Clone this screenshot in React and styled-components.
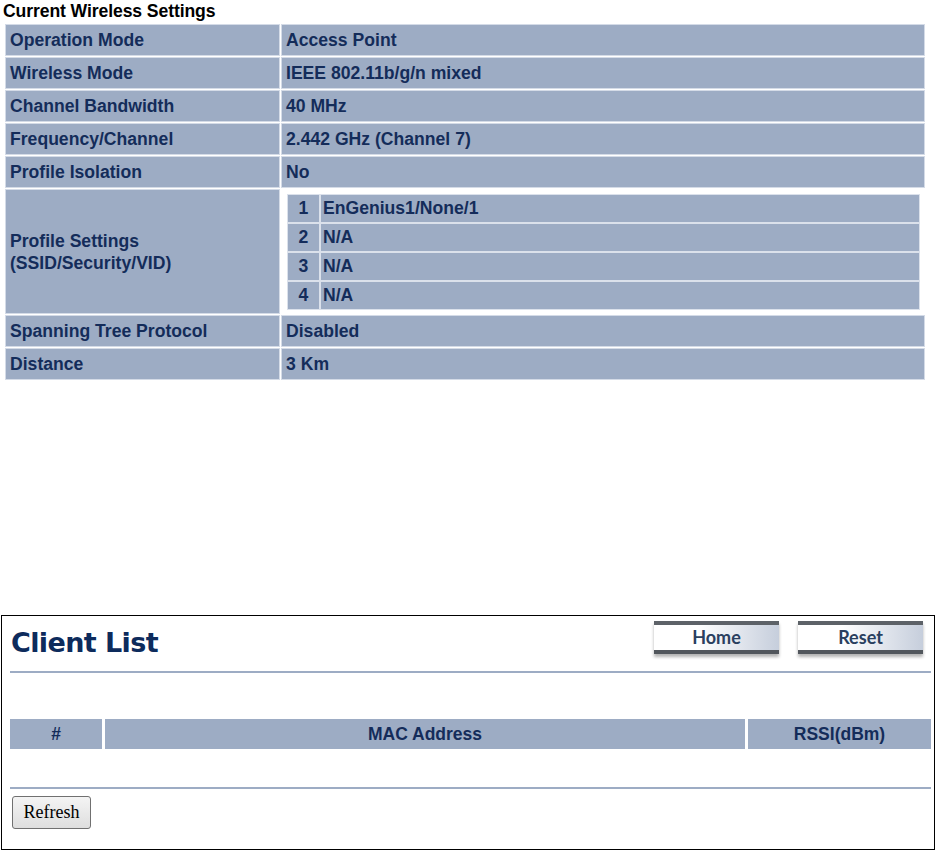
import React from "react";
import styled, { createGlobalStyle } from "styled-components";

const GlobalStyle = createGlobalStyle`
  body {
    margin: 0;
    background: #fff;
    font-family: "Liberation Sans", Arial, sans-serif;
  }
`;

const settings = [
  { label: "Operation Mode", value: "Access Point" },
  { label: "Wireless Mode", value: "IEEE 802.11b/g/n mixed" },
  { label: "Channel Bandwidth", value: "40 MHz" },
  { label: "Frequency/Channel", value: "2.442 GHz (Channel 7)" },
  { label: "Profile Isolation", value: "No" },
  { label: ["Profile Settings", "(SSID/Security/VID)"], profiles: ["EnGenius1/None/1", "N/A", "N/A", "N/A"] },
  { label: "Spanning Tree Protocol", value: "Disabled" },
  { label: "Distance", value: "3 Km" },
];

function App() {
  return (
    <>
      <GlobalStyle />
      <Page>
        <Title>Current Wireless Settings</Title>
        <SettingsTable>
          {settings.map((row) => (
            <React.Fragment key={Array.isArray(row.label) ? row.label[0] : row.label}>
              <Cell $multi={Array.isArray(row.label)}>
                {Array.isArray(row.label)
                  ? row.label.map((l) => <div key={l}>{l}</div>)
                  : row.label}
              </Cell>
              {row.profiles ? (
                <NestedHolder>
                  <ProfileTable>
                    {row.profiles.map((p, i) => (
                      <React.Fragment key={i}>
                        <NumCell>{i + 1}</NumCell>
                        <ProfileCell>{p}</ProfileCell>
                      </React.Fragment>
                    ))}
                  </ProfileTable>
                </NestedHolder>
              ) : (
                <Cell>{row.value}</Cell>
              )}
            </React.Fragment>
          ))}
        </SettingsTable>

        <ClientBox>
          <ClientHeader>
            <ClientTitle>Client List</ClientTitle>
            <NavButtons>
              <NavButton>Home</NavButton>
              <NavButton>Reset</NavButton>
            </NavButtons>
          </ClientHeader>
          <Divider />
          <ClientTable>
            <HeadCell>#</HeadCell>
            <HeadCell>MAC Address</HeadCell>
            <HeadCell>RSSI(dBm)</HeadCell>
          </ClientTable>
          <Divider $top={38} />
          <RefreshButton>Refresh</RefreshButton>
        </ClientBox>
      </Page>
    </>
  );
}

const Page = styled.div`
  width: 937px;
  padding-top: 1px;
`;

const Title = styled.div`
  font-family: "Liberation Sans", Arial, sans-serif;
  font-weight: bold;
  font-size: 17.6px;
  line-height: 20px;
  color: #000;
  padding-left: 3px;
  margin-bottom: 3px;
  letter-spacing: -0.1px;
`;

const SettingsTable = styled.div`
  margin-left: 5px;
  width: 920px;
  display: grid;
  grid-template-columns: 275px 644px;
  gap: 1px;
`;

const Cell = styled.div`
  box-sizing: border-box;
  min-height: 32px;
  border: 1px solid #d4dbe7;
  background: #9dacc4;
  color: #142c5a;
  font-weight: bold;
  font-size: 17.6px;
  line-height: ${(p) => (p.$multi ? "22px" : "30px")};
  padding: 0 3px 0 4px;
  display: flex;
  flex-direction: column;
  justify-content: center;
  white-space: nowrap;
`;

const NestedHolder = styled.div`
  box-sizing: border-box;
  border: 1px solid #fff;
  padding: 4px 4px 3px 5px;
`;

const ProfileTable = styled.div`
  display: grid;
  grid-template-columns: 33px 1fr;
`;

const ProfileCell = styled.div`
  box-sizing: border-box;
  height: 29px;
  border: 1px solid #dbe1eb;
  background: #9dacc4;
  color: #142c5a;
  font-weight: bold;
  font-size: 17.6px;
  line-height: 27px;
  padding: 0 2px;
`;

const NumCell = styled(ProfileCell)`
  text-align: center;
  padding: 0;
`;

const ClientBox = styled.div`
  box-sizing: border-box;
  margin: 235px 0 0 1px;
  width: 934px;
  height: 235px;
  border: 1px solid #000;
  padding: 0 3px 0 8px;
`;

const ClientHeader = styled.div`
  height: 55px;
  display: flex;
  justify-content: space-between;
  align-items: flex-start;
`;

const ClientTitle = styled.h1`
  margin: 11px 0 0 1px;
  font-family: "DejaVu Sans", Verdana, sans-serif;
  font-weight: bold;
  font-size: 27px;
  letter-spacing: -0.6px;
  line-height: 31px;
  color: #0d2b5c;
`;

const NavButtons = styled.div`
  display: flex;
  gap: 19px;
  margin: 5px 8px 0 0;
`;

const NavButton = styled.div`
  box-sizing: border-box;
  width: 125px;
  height: 33px;
  border-top: 4px solid #5d6268;
  border-bottom: 4px solid #51565c;
  background: linear-gradient(to right, #ffffff 35%, #c6cedc 100%);
  box-shadow: 0 3px 3px rgba(0, 0, 0, 0.3);
  font-family: Lato, "Noto Sans", sans-serif;
  font-weight: bold;
  font-size: 18px;
  line-height: 25px;
  color: #2a405f;
  text-align: center;
`;

const Divider = styled.div`
  height: 2px;
  background: #9dacc4;
  margin-top: ${(p) => p.$top || 0}px;
`;

const ClientTable = styled.div`
  margin-top: 46px;
  display: grid;
  grid-template-columns: 92px 640px 1fr;
  gap: 3px;
`;

const HeadCell = styled.div`
  height: 30px;
  background: #9dacc4;
  color: #142c5a;
  font-weight: bold;
  font-size: 17.5px;
  line-height: 30px;
  text-align: center;
`;

const RefreshButton = styled.button`
  display: block;
  margin: 7px 0 0 2px;
  width: 79px;
  height: 33px;
  padding: 0;
  border: 1px solid #707070;
  border-radius: 3px;
  background: linear-gradient(#f4f4f4, #dedede);
  font-family: "Liberation Serif", "Times New Roman", serif;
  font-size: 18px;
  color: #000;
`;

export default App;
